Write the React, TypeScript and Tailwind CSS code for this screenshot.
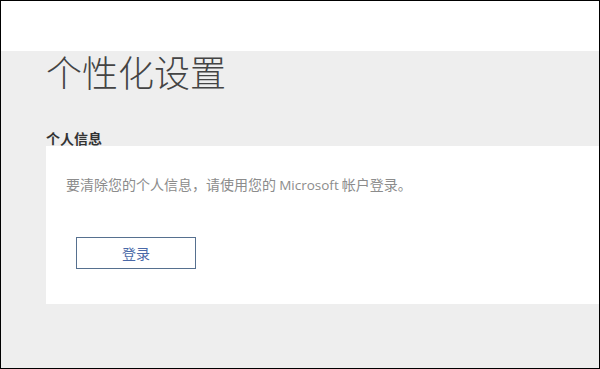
export default function App() {
  return (
    <div className="w-[600px] h-[369px] border border-black bg-[#eeeeee] flex flex-col overflow-hidden font-['Noto_Sans_CJK_SC',sans-serif]">
      <div className="h-[50px] bg-white shrink-0" />
      <div className="pl-[45px]">
        <h1 className="mt-[2px] text-[36px] leading-[36px] text-[#444444] font-light">个性化设置</h1>
        <h2 className="mt-[42px] mb-[1px] text-[14px] leading-[14px] font-bold text-[#333333]">个人信息</h2>
        <div className="bg-white pl-[20px] pt-[31px] pb-[35px]">
          <p className="text-[14px] leading-[14px] text-[#8c8c8c] font-normal">
            要清除您的个人信息，请使用您的 <span className="font-['Open_Sans',sans-serif] text-[13.5px]">Microsoft</span> 帐户登录。
          </p>
          <button className="mt-[45px] ml-[10px] w-[120px] h-[32px] border border-[#56708f] bg-white text-[14px] text-[#4a69a8] flex items-center justify-center">
            登录
          </button>
        </div>
      </div>
    </div>
  );
}
